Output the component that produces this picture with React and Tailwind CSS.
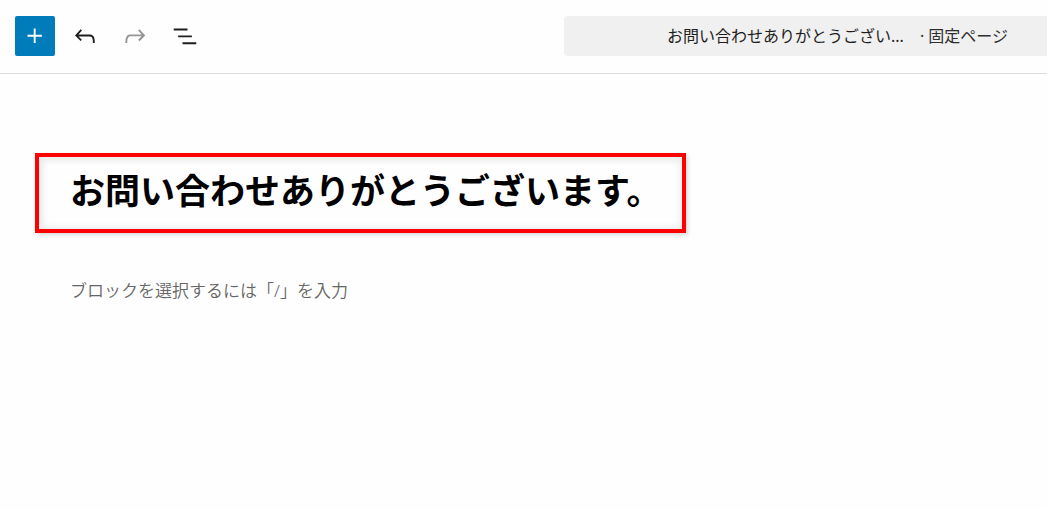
import { useState } from "react";

const ICONS = {
  plus: "M11 12.5V17.5H12.5V12.5H17.5V11H12.5V6H11V11H6V12.5H11Z",
  undo: "M18.3 11.7c-.6-.6-1.4-.9-2.3-.9H6.7l2.9-3.3-1.1-1-4.5 5L8.5 16l1-1-2.7-2.7H16c.5 0 .9.2 1.3.5 1 1 1 3.4 1 4.5v.3h1.5v-.2c0-1.5 0-4.3-1.5-5.7z",
  redo: "M15.6 6.5l-1.1 1 2.9 3.3H8c-.9 0-1.7.3-2.3.9-1.4 1.5-1.4 4.2-1.4 5.6v.2h1.5v-.3c0-1.1 0-3.5 1-4.5.3-.3.7-.5 1.3-.5h9.2L14.5 15l1.1 1.1 4.6-4.6-4.6-5z",
  list: "M3 6h11v1.5H3V6Zm3.5 5.5h11V13h-11v-1.5ZM21 17H10v1.5h11V17Z",
};

function ToolButton({ icon, label, className = "text-[#1e1e1e]", ...props }) {
  return (
    <button
      type="button"
      aria-label={label}
      className={`flex size-10 items-center justify-center rounded-[2px] ${className}`}
      {...props}
    >
      <svg viewBox="0 0 24 24" className="size-[30px]" fill="currentColor" aria-hidden="true">
        <path d={ICONS[icon]} />
      </svg>
    </button>
  );
}

export default function App() {
  const [block, setBlock] = useState("");

  return (
    <div className="min-h-screen bg-[#fefefe] font-['Noto_Sans','Noto_Sans_CJK_JP',sans-serif]">
      <header className="flex items-center justify-between border-b border-[#dddddd] pt-4 pb-[17px] pl-[15px]">
        <div className="flex gap-2.5">
          <ToolButton icon="plus" label="ブロック挿入ツールを切り替え" className="bg-[#007cba] text-white" />
          <ToolButton icon="undo" label="元に戻す" />
          <ToolButton icon="redo" label="やり直す" className="text-[#949494]" disabled />
          <ToolButton icon="list" label="ドキュメント概観" />
        </div>
        <button
          type="button"
          className="flex h-10 w-[483px] items-center gap-4 rounded-l-[4px] bg-[#f0f0f0] pl-[103px] text-base whitespace-nowrap text-[#1e1e1e]"
        >
          <span>お問い合わせありがとうござい...</span>
          <span className="text-[#2f2f2f]">· 固定ページ</span>
        </button>
      </header>

      <main className="px-[35px] pt-[79px]">
        <h1 className="w-fit border-4 border-[#ff0000] pt-2 pr-5 pb-3 pl-[31px] text-[35px] leading-[52px] font-bold text-black shadow-[2px_2px_4px_rgba(0,0,0,0.15),inset_1px_1px_6px_3px_rgba(0,0,0,0.08)]">
          お問い合わせありがとうございます。
        </h1>
        <input
          type="text"
          aria-label="ブロックを追加"
          placeholder="ブロックを選択するには「/」を入力"
          value={block}
          onChange={(e) => setBlock(e.target.value)}
          className="mt-11 ml-[35px] block w-1/2 text-[17px] leading-7 font-[350] text-black outline-none placeholder:text-[#666666]"
        />
      </main>
    </div>
  );
}
